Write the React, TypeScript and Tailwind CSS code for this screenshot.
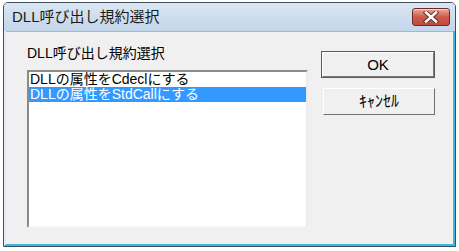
import { useState } from "react";

const font = { fontFamily: '"Liberation Sans", "Noto Sans CJK JP", sans-serif' };

const items = ["DLLの属性をCdeclにする", "DLLの属性をStdCallにする"];

function CloseButton() {
  return (
    <div className="w-[38px] h-[18px] mt-[5px] rounded-[3px] border border-[#6a2b25] bg-gradient-to-b from-[#e6aa9e] via-[#cd5a4b] to-[#c24a3b] flex items-center justify-center shadow-[inset_0_1px_0_rgba(255,255,255,0.5)]">
      <svg width="16" height="12" viewBox="0 0 16 12">
        <path d="M3 1.5 L13 10.5 M13 1.5 L3 10.5" stroke="#5a2a26" strokeWidth="4.4" strokeLinecap="square" />
        <path d="M3 1.5 L13 10.5 M13 1.5 L3 10.5" stroke="#ffffff" strokeWidth="2.6" strokeLinecap="square" />
      </svg>
    </div>
  );
}

export default function App() {
  const [selected, setSelected] = useState(1);

  return (
    <div className="w-[459px] h-[251px] bg-white pl-[3px] pt-[2px]" style={font}>
      <div className="w-[453px] h-[245px] border border-[#3f4d5c] rounded-t-[5px] flex flex-col overflow-hidden bg-[#c7d9ec]">
        {/* title bar */}
        <div className="h-[28px] flex items-start justify-between pl-[8px] pr-[5px] bg-gradient-to-b from-[#dae6f2] to-[#c3d6ea]">
          <span className="text-[15px] leading-[18px] mt-[5px] text-[#1b1b1b]">DLL呼び出し規約選択</span>
          <CloseButton />
        </div>

        {/* frame + client */}
        <div className="flex-1 flex border-l-2 border-l-[#e4eef8] border-r-2 border-r-[#3fb6e0] border-b-2 border-b-[#3fb6e0]">
          <div className="flex-1 bg-[#f0f0f0] border-t border-t-[#a9b7c6] flex">
            {/* left column */}
            <div className="flex flex-col pl-[21px] pt-[13px]">
              <span className="text-[14px] leading-[16px] h-[25px] text-black">DLL呼び出し規約選択</span>
              <div className="w-[281px] h-[158px] bg-white border-2 border-t-[#8a8a8a] border-l-[#8a8a8a] border-b-[#f4f4f4] border-r-[#ececec]">
                {items.map((label, i) => (
                  <div
                    key={label}
                    onClick={() => setSelected(i)}
                    className={`h-[15px] text-[14px] leading-[15px] pl-[1px] whitespace-nowrap overflow-hidden ${
                      selected === i ? "bg-[#3399ff] text-white" : "text-black"
                    }`}
                  >
                    {label}
                  </div>
                ))}
              </div>
            </div>

            {/* buttons */}
            <div className="flex flex-col items-end gap-[10px] pl-[13px] pt-[19px]">
              <button className="w-[114px] h-[27px] border border-[#5a5a5a] bg-[#f0f0f0] p-0">
                <div className="h-full border border-t-white border-l-white border-b-[#7a7a7a] border-r-[#7a7a7a] flex items-center justify-center text-[15px] leading-[16px] text-black">
                  OK
                </div>
              </button>
              <button className="w-[112px] h-[27px] border border-t-white border-l-white border-b-[#6e6e6e] border-r-[#6e6e6e] bg-[#f0f0f0] flex items-center justify-center text-[16px] leading-[18px] text-black">
                ｷｬﾝｾﾙ
              </button>
            </div>
          </div>
        </div>
      </div>
    </div>
  );
}
